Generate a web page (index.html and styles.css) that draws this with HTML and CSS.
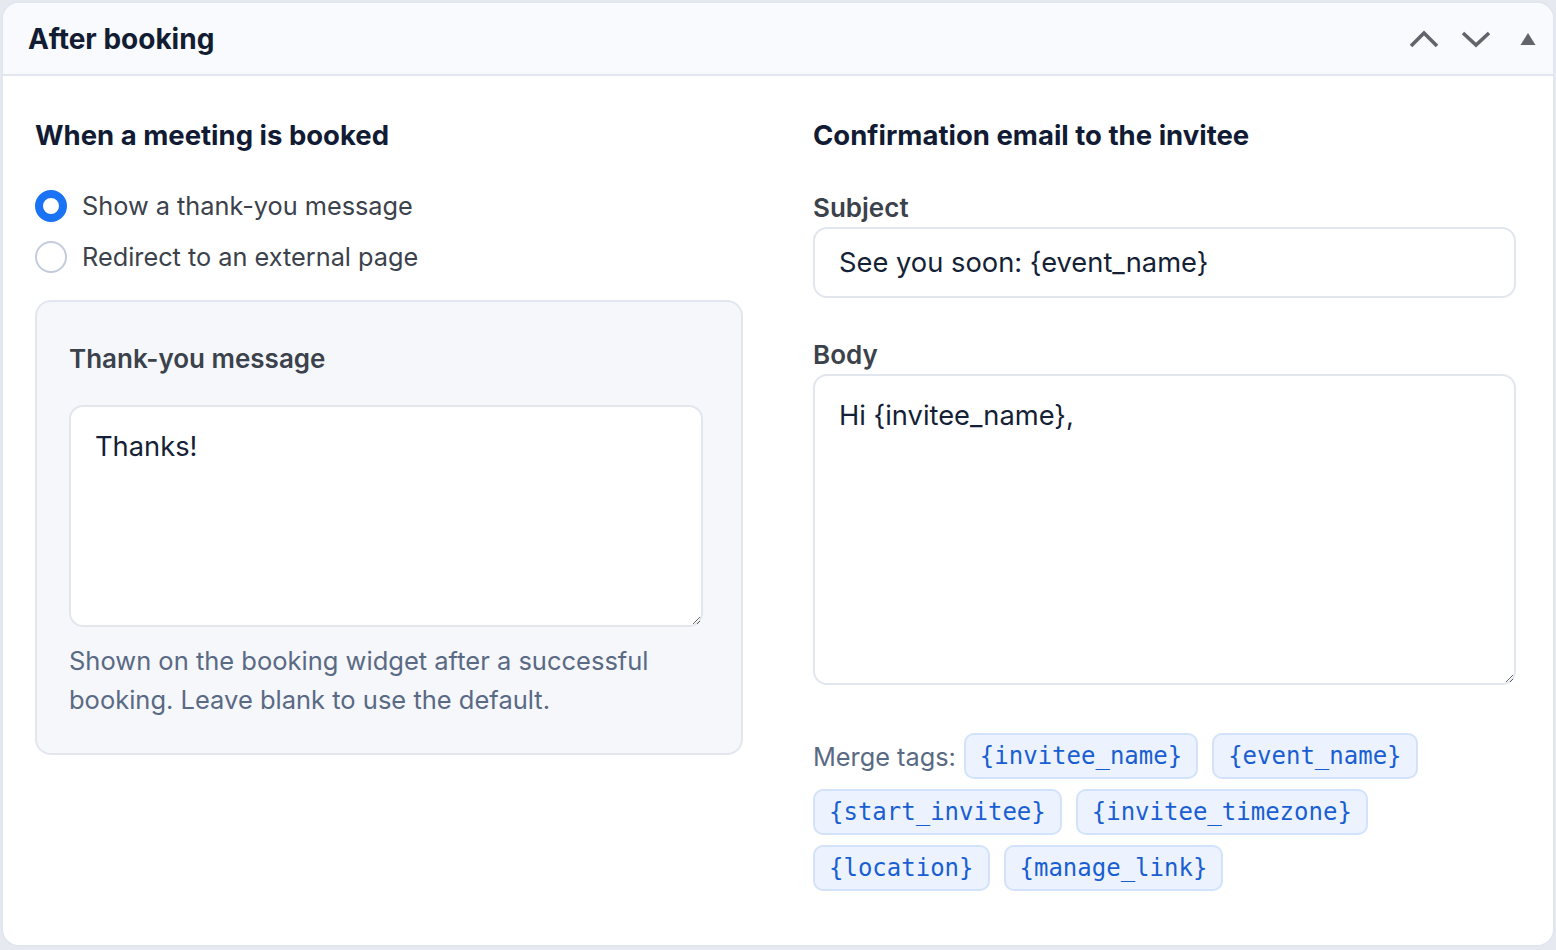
FILE: index.html
```html
<!DOCTYPE html>
<html lang="en">
<head>
  <meta charset="UTF-8">
  <meta name="viewport" content="width=device-width, initial-scale=1">
  <title>After booking</title>
  <link rel="stylesheet" href="styles.css">
</head>
<body>

<div class="postbox">
  <div class="postbox-header">
    <h2>After booking</h2>
    <div class="handle-actions">
      <button class="handle-btn" aria-label="Move up">
        <svg width="30" height="30" viewBox="0 0 30 30"><polyline points="2,22 15,9 28,22" fill="none" stroke="currentColor" stroke-width="3.6"/></svg>
      </button>
      <button class="handle-btn" aria-label="Move down">
        <svg width="30" height="30" viewBox="0 0 30 30"><polyline points="2,9 15,21 28,9" fill="none" stroke="currentColor" stroke-width="3.6"/></svg>
      </button>
      <button class="handle-btn" aria-label="Toggle panel">
        <svg width="30" height="30" viewBox="0 0 30 30"><polygon points="7.5,21 15,9 22.5,21" fill="currentColor"/></svg>
      </button>
    </div>
  </div>

  <div class="postbox-body">
    <!-- coluna esquerda -->
    <div class="col">
      <h3>When a meeting is booked</h3>

      <div class="radios">
        <label class="radio-row">
          <input type="radio" name="after" checked>
          <span>Show a thank-you message</span>
        </label>
        <label class="radio-row">
          <input type="radio" name="after">
          <span>Redirect to an external page</span>
        </label>
      </div>

      <div class="panel">
        <label class="field-label" for="thanks">Thank-you message</label>
        <textarea id="thanks" class="field thanks-area">Thanks!</textarea>
        <p class="help">Shown on the booking widget after a successful booking. Leave blank to use the default.</p>
      </div>
    </div>

    <!-- coluna direita -->
    <div class="col">
      <h3>Confirmation email to the invitee</h3>

      <label class="field-label subject-label" for="subject">Subject</label>
      <input id="subject" class="field" type="text" value="See you soon: {event_name}">

      <label class="field-label body-label" for="body">Body</label>
      <textarea id="body" class="field body-area">Hi {invitee_name},</textarea>

      <div class="merge-tags">
        <span class="merge-label">Merge tags:</span>
        <code class="tag">{invitee_name}</code>
        <code class="tag">{event_name}</code>
        <code class="tag">{start_invitee}</code>
        <code class="tag">{invitee_timezone}</code>
        <code class="tag">{location}</code>
        <code class="tag">{manage_link}</code>
      </div>
    </div>
  </div>
</div>

</body>
</html>
```

FILE: styles.css
```css
* {
  box-sizing: border-box;
}

body {
  margin: 0;
  padding: 1px;
  background-color: #e6eaf0;
  font-family: Inter, "Noto Sans", Arial, sans-serif;
  color: #111b33;
}

.postbox {
  min-height: 946px;
  background-color: #ffffff;
  border: 2px solid #e2e7ef;
  border-radius: 18px;
  overflow: hidden;
}

.postbox-header {
  display: flex;
  align-items: center;
  justify-content: space-between;
  height: 73px;
  padding: 0 5px 0 25px;
  background-color: #f8fafd;
  border-bottom: 2px solid #e2e7ef;
}

.postbox-header h2 {
  margin: 0;
  font-size: 28px;
  font-weight: 700;
  color: #121c33;
}

.handle-actions {
  display: flex;
  gap: 12px;
}

.handle-btn {
  width: 40px;
  height: 40px;
  padding: 0;
  border: none;
  background: none;
  color: #61656b;
  display: flex;
  align-items: center;
  justify-content: center;
  cursor: pointer;
}

.postbox-body {
  display: grid;
  grid-template-columns: 708px 1fr;
  gap: 70px;
  padding: 43px 37px 40px 32px;
}

.col h3 {
  margin: 0;
  font-size: 27.5px;
  line-height: 32px;
  font-weight: 700;
  color: #111b33;
}

/* Radios */
.radios {
  display: flex;
  flex-direction: column;
  gap: 19px;
  margin-top: 39px;
}

.radio-row {
  display: flex;
  align-items: center;
  gap: 15px;
  font-size: 25.3px;
  line-height: 32px;
  color: #3b424b;
  cursor: pointer;
}

.radio-row input {
  appearance: none;
  -webkit-appearance: none;
  margin: 0;
  width: 32px;
  height: 32px;
  border: 2px solid #c3ccdc;
  border-radius: 50%;
  background-color: #ffffff;
}

.radio-row input:checked {
  border: 8px solid #1a73f5;
}

/* Painel cinza */
.panel {
  margin-top: 27px;
  padding: 41px 38px 34px 32px;
  background-color: #f5f7fb;
  border: 2px solid #e2e7ef;
  border-radius: 16px;
}

.field-label {
  display: block;
  font-size: 26px;
  line-height: 32px;
  font-weight: 600;
  color: #3b424b;
}

.field {
  display: block;
  width: 100%;
  font-family: inherit;
  font-size: 27.3px;
  line-height: 36px;
  color: #151f36;
  background-color: #ffffff;
  border: 2px solid #e2e7ef;
  border-radius: 14px;
  padding: 22px 24px;
  outline: none;
}

textarea.field {
  resize: vertical;
}

.thanks-area {
  margin-top: 30px;
  height: 222px;
}

.help {
  margin: 14px 0 0;
  font-size: 25.5px;
  line-height: 39px;
  color: #5a6a84;
}

/* Coluna direita */
.subject-label {
  margin-top: 41px;
}

input.field {
  margin-top: 3px;
  height: 71px;
  padding: 0 24px;
}

.body-label {
  margin-top: 41px;
}

.body-area {
  margin-top: 3px;
  height: 311px;
  padding-top: 22px;
}

.merge-tags {
  display: flex;
  flex-wrap: wrap;
  align-items: center;
  gap: 10px 14px;
  margin-top: 48px;
}

.merge-label {
  font-size: 25.3px;
  color: #5a6a84;
  margin-right: -6px;
}

.tag {
  font-family: "DejaVu Sans Mono", "Liberation Mono", monospace;
  font-size: 24px;
  line-height: 34px;
  padding: 4px 14px;
  color: #1a5fd2;
  background-color: #ecf3fe;
  border: 2px solid #d3e2fb;
  border-radius: 10px;
}
```
